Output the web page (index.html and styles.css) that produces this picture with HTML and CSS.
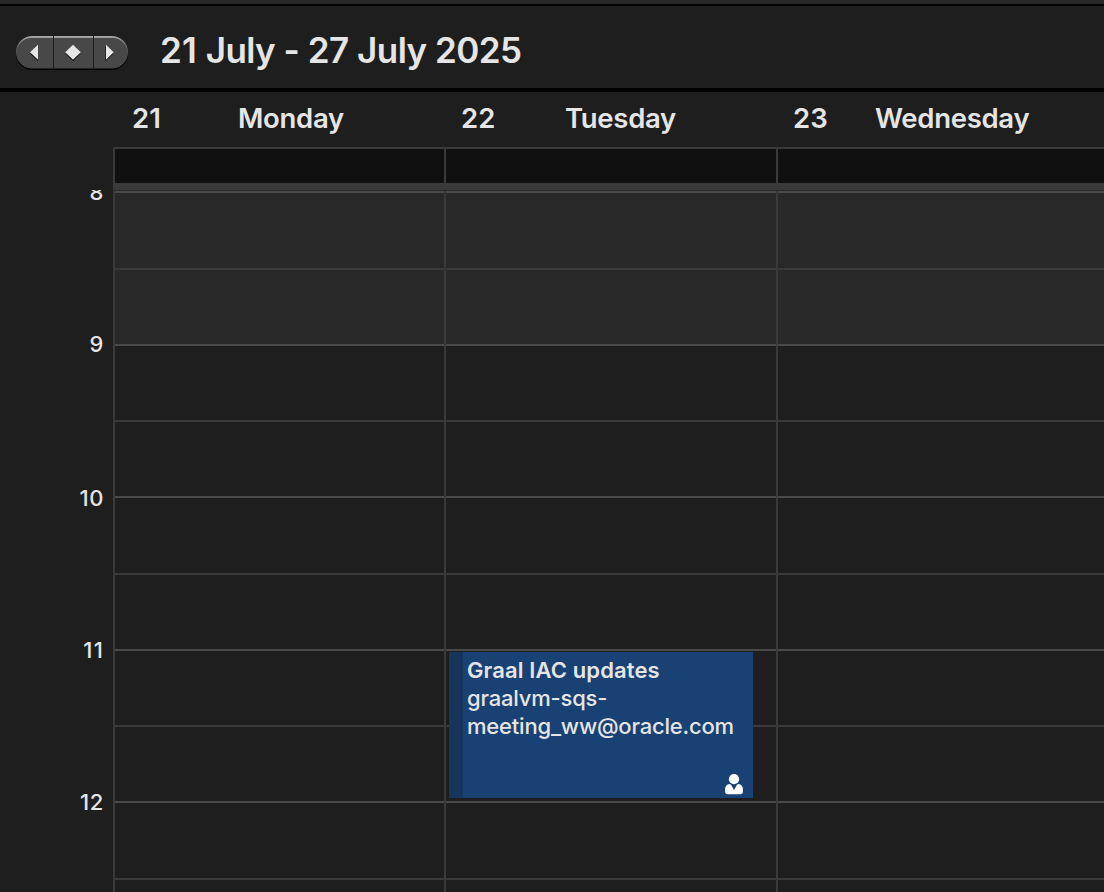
FILE: index.html
```html
<!DOCTYPE html>
<html lang="en">
<head>
<meta charset="utf-8">
<title>Calendar</title>
<link rel="stylesheet" href="styles.css">
</head>
<body>
<div class="app">
  <div class="strip"></div>
  <header class="toolbar">
    <svg class="nav" width="114" height="36" viewBox="0 0 114 36" role="img" aria-label="Previous, today, next">
      <defs>
        <linearGradient id="edge" x1="0" y1="0" x2="0" y2="1">
          <stop offset="0" stop-color="#a6a6a6"/>
          <stop offset="0.45" stop-color="#5a5a5a"/>
          <stop offset="0.6" stop-color="#484848"/>
        </linearGradient>
      </defs>
      <rect x="1" y="3" width="112" height="32" rx="16" fill="#000"/>
      <rect x="1" y="1" width="112" height="32.5" rx="16.2" fill="url(#edge)"/>
      <rect x="1.5" y="3" width="111" height="30" rx="15" fill="#484848"/>
      <path d="M38.5 1v33M78.500 1v33" stroke="#1d1d1d"/>
      <g fill="#000"><path d="M15 18.500l8-7.500v15z"/><path d="M50.500 18.500l7.500-7.500 7.500 7.500-7.500 7.500z"/><path d="M98.500 18.500l-8-7.500v15z"/></g>
      <g fill="#e6e6e6"><path d="M15 17.200l8-7.500v15z"/><path d="M50.200 17.200l7.800-7.500 7.800 7.500-7.800 7.500z"/><path d="M98.700 17.200l-7.700-7.500v15z"/></g>
    </svg>
    <h1 class="title"><span class="start">21</span> July - 27 July 2025</h1>
  </header>
  <div class="days">
    <div class="day"><span class="date">21</span><span class="name">Monday</span></div>
    <div class="day tuesday"><span class="date">22</span><span class="name">Tuesday</span></div>
    <div class="day wednesday"><span class="date">23</span><span class="name">Wednesday</span></div>
  </div>
  <div class="allday"><div class="cell"></div><div class="cell"></div><div class="cell"></div></div>
  <div class="divider"></div>
  <main class="week">
    <div class="hours">
      <span class="hour eight">8</span><span class="hour nine">9</span><span class="hour">10</span><span class="hour eleven">11</span><span class="hour">12</span>
    </div>
    <div class="column">
      <div class="slot off"></div><div class="slot half off"></div><div class="slot"></div><div class="slot half"></div><div class="slot"></div><div class="slot half"></div><div class="slot"></div><div class="slot half"></div><div class="slot"></div><div class="slot half"></div>
    </div>
    <div class="column">
      <div class="slot off"></div><div class="slot half off"></div><div class="slot"></div><div class="slot half"></div><div class="slot"></div><div class="slot half"></div><div class="slot"></div><div class="slot half"></div><div class="slot"></div><div class="slot half"></div>
      <article class="event">
        <div class="event-title">Graal IAC updates</div>
        <div class="event-place">graalvm-sqs-<br>meeting_ww@oracle.com</div>
        <svg class="person" width="18" height="21" viewBox="0 0 18 21" aria-hidden="true">
          <circle cx="9" cy="5.200" r="5.100" fill="#fff"/>
          <path d="M4.600 10.100L6 10.800L9 15.900L12 10.800L13.400 10.100C16.300 10.400 18 12.800 18 15.400v2.100c0 1.800-1.100 2.700-2.900 2.700H2.900C1.100 20.200 0 19.300 0 17.500v-2.100c0-2.600 1.700-5 4.600-5.300z" fill="#fff"/>
        </svg>
      </article>
    </div>
    <div class="column">
      <div class="slot off"></div><div class="slot half off"></div><div class="slot"></div><div class="slot half"></div><div class="slot"></div><div class="slot half"></div><div class="slot"></div><div class="slot half"></div><div class="slot"></div><div class="slot half"></div>
    </div>
  </main>
</div>
</body>
</html>
```
FILE: styles.css
```css
* { box-sizing: border-box; }
body { margin: 0; background: #1e1e1e; color: #e5e5e5; font-family: Inter, sans-serif; }
.app { width: 1104px; height: 892px; overflow: hidden; display: flex; flex-direction: column; }
.strip { height: 6px; background: #292929; border-bottom: 2px solid #000; flex: none; }
.toolbar { height: 86px; flex: none; display: flex; align-items: flex-start; padding: 29px 0 0 15px; border-bottom: 4px solid #000; }
.nav { flex: none; }
.title { margin: -6px 0 0 31px; font-size: 35px; line-height: 42px; font-weight: 600; letter-spacing: -0.6px; word-spacing: 0.3px; white-space: nowrap; }
.start { letter-spacing: 0.3px; }
.days, .allday { display: grid; grid-template-columns: 331px 332px 328px; margin-left: 113px; flex: none; }
.days { height: 55px; }
.day { display: flex; padding: 9px 0 0 19px; font-size: 27.5px; line-height: 34px; font-weight: 600; }
.date { width: 106px; flex: none; }
.name { letter-spacing: -0.3px; }
.tuesday, .wednesday { padding-left: 17px; }
.tuesday .date { width: 104px; }
.wednesday .date { width: 82px; }
.allday { height: 36px; background: #101010; border-top: 2px solid #3a3a3b; }
.cell { border-left: 2px solid #3a3a3b; }
.divider { height: 8px; flex: none; margin-left: 113px; background: #3a3a3b; border-bottom: 1px solid #292929; }
.week { flex: 1; display: grid; grid-template-columns: 113px 331px 332px 328px; min-height: 0; }
.hours { display: flex; flex-direction: column; align-items: flex-end; padding-right: 9px; margin-top: -1px; overflow: hidden; font-size: 22px; font-weight: 500; letter-spacing: 0.6px; }
.hour { height: 152px; line-height: 26px; flex: none; }
.eight { height: 152px; margin-top: -11px; }
.nine { height: 154px; }
.eleven { letter-spacing: 1.2px; }
.column { position: relative; border-left: 2px solid #3a3a3b; }
.slot { height: 76px; border-top: 2px solid #4a4a4a; }
.slot.half { border-color: #3a3a3b; }
.slot.off { background-color: #282828; }
/* Every fourth slot absorbs the fractional row height. */
.slot:nth-child(4n + 1) { height: 77px; }
.event { position: absolute; left: 3px; top: 461px; width: 304px; height: 146px; padding: 4px 0 0 4px; border-left: 14px solid #16345c; background: #1a4173; font-size: 22px; line-height: 28px; }
.event-title { font-weight: 600; letter-spacing: 0.12px; }
.event-place { font-weight: 500; letter-spacing: -0.2px; white-space: nowrap; }
.person { position: absolute; right: 10px; bottom: 3px; }
```
